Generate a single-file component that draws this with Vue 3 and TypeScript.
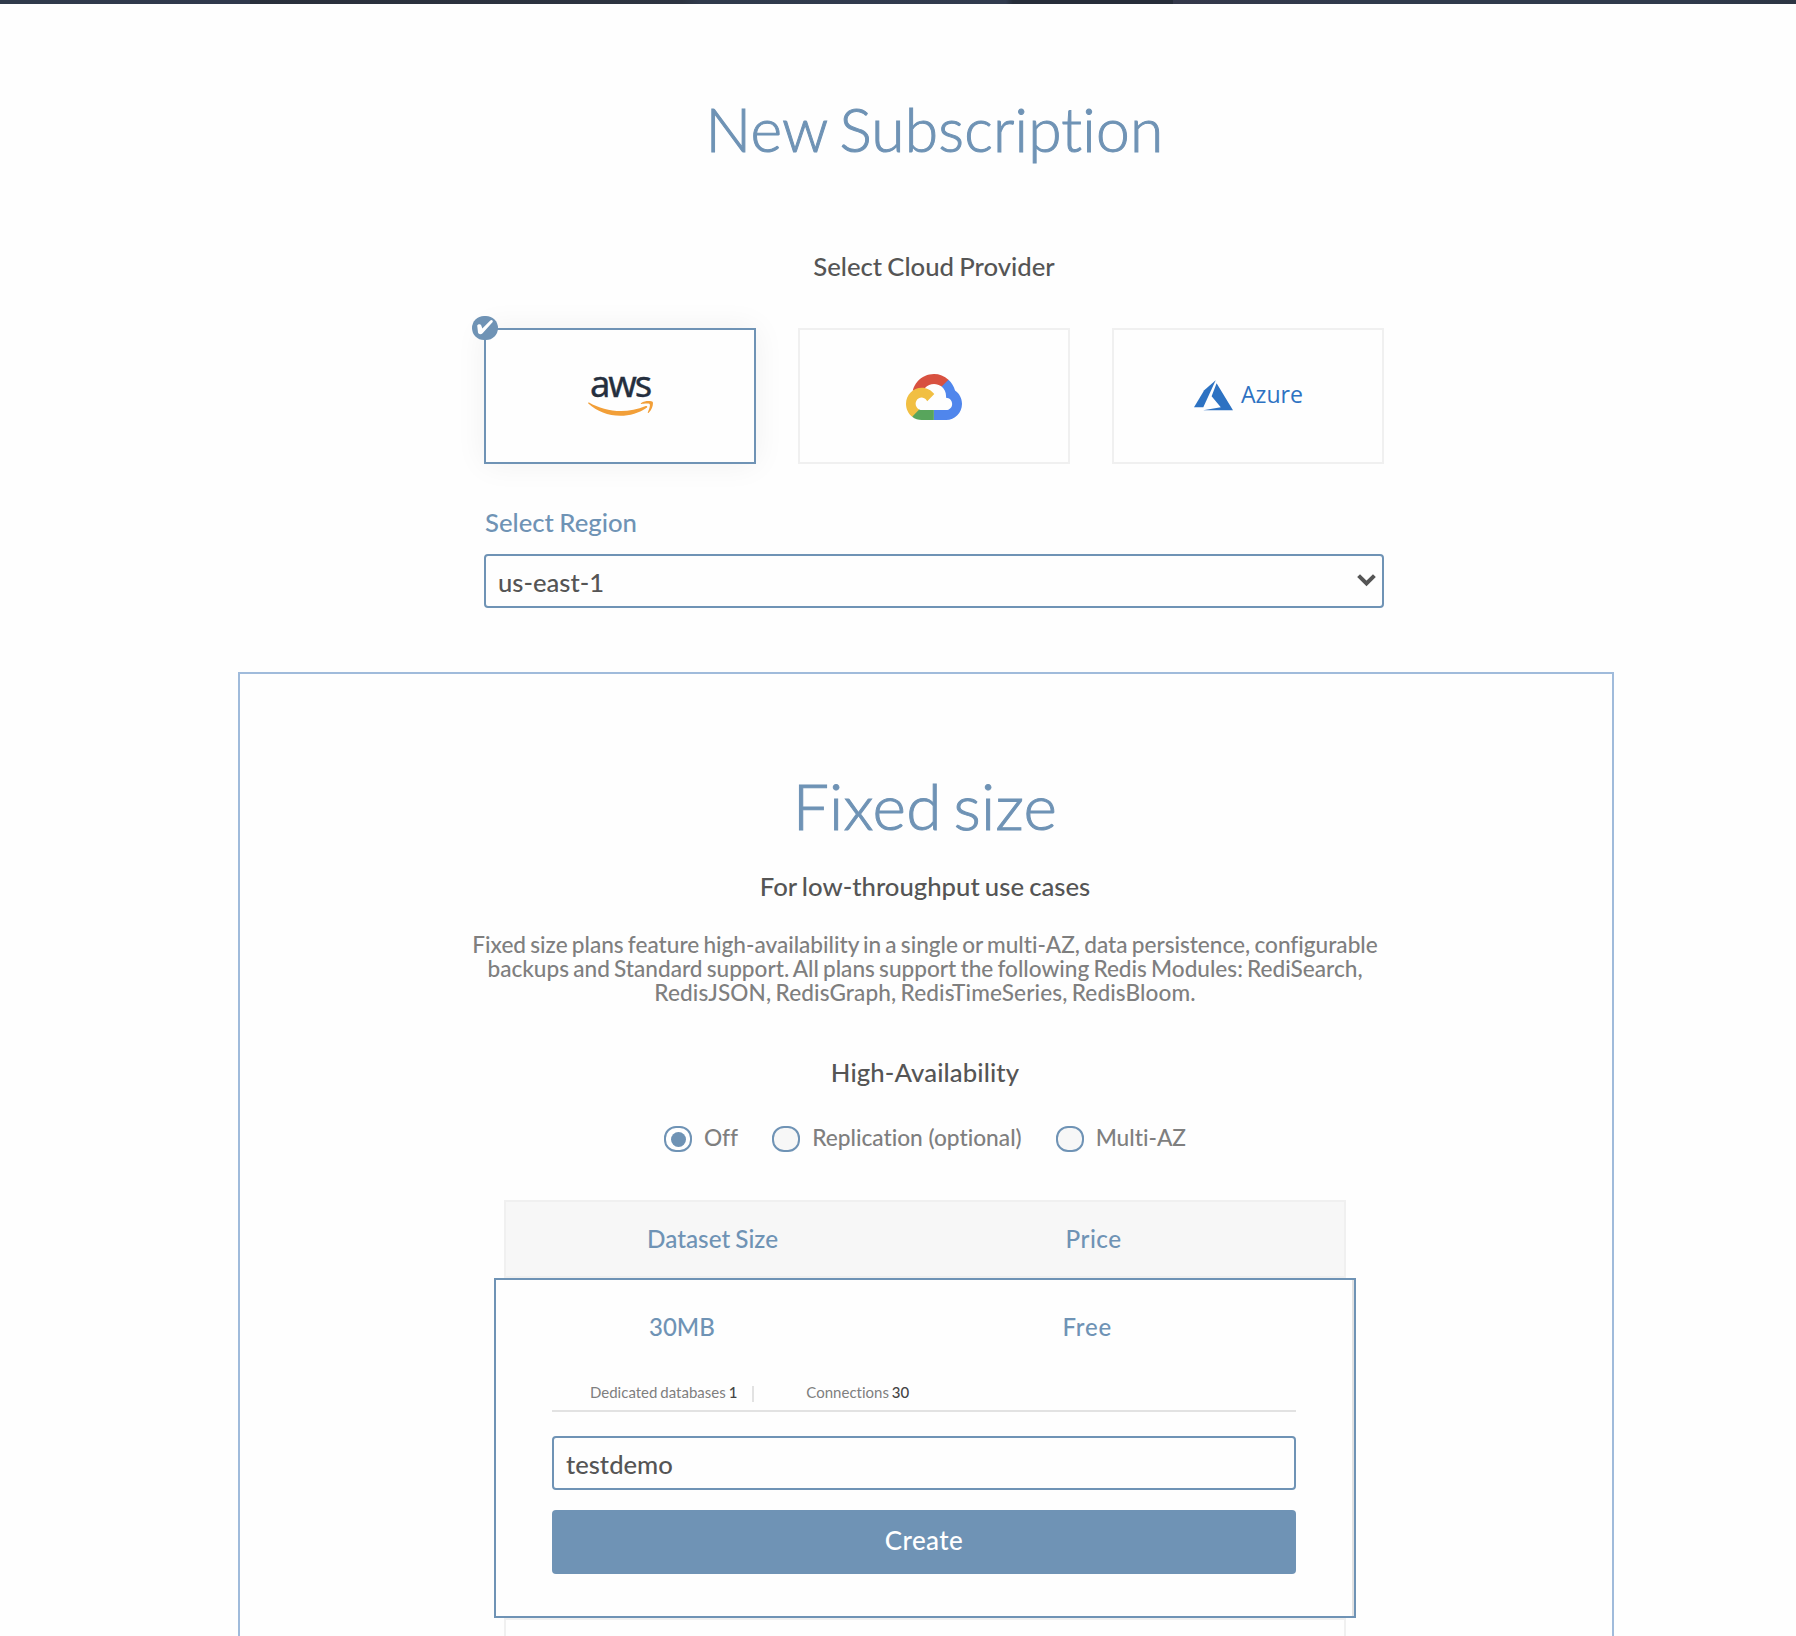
<script setup lang="ts">
import { ref } from 'vue'

const region = ref('us-east-1')
const dbName = ref('testdemo')
const availability = ref('off')
const options = [
  { id: 'off', label: 'Off' },
  { id: 'replication', label: 'Replication (optional)' },
  { id: 'multi', label: 'Multi-AZ' },
]
</script>

<template>
  <div class="page">
    <div class="topbar"></div>
    <section class="setup">
      <h1>New Subscription</h1>
      <h2 class="subhead">Select Cloud Provider</h2>
      <div class="providers">
        <div class="provider selected">
          <svg class="badge" width="26" height="24" viewBox="0 0 26 24">
            <rect width="26" height="24" rx="12" fill="#6f93b5" />
            <path d="M5.2 9.6C6.2 8 8.6 8 9.3 9.4L10.3 12.6L18.3 4.6C19.6 3.4 21.2 4.4 20.7 6L10.6 17.2C9.2 18.8 6.6 18.6 6 16.6Z" fill="#fff" />
          </svg>
          <div class="aws">
            <span class="aws-word">aws</span>
            <svg width="65" height="15" viewBox="1.5 113 301 69" fill="#f29f38">
              <path d="M273.5 143.7c-32.9 24.3-80.7 37.2-121.8 37.2c-57.6 0-109.5-21.3-148.7-56.7c-3.1-2.8-.3-6.6 3.4-4.4c42.4 24.6 94.7 39.5 148.8 39.5c36.5 0 76.6-7.6 113.5-23.2c5.5-2.5 10.2 3.6 4.8 7.6z" />
              <path d="M287.2 128.1c-4.2-5.4-27.8-2.6-38.5-1.3c-3.2.4-3.7-2.4-.8-4.5c18.8-13.2 49.7-9.4 53.3-5c3.6 4.5-1 35.4-18.6 50.2c-2.7 2.3-5.3 1.1-4.1-1.9c4-9.9 12.9-32.2 8.7-37.5z" />
            </svg>
          </div>
        </div>
        <div class="provider">
          <svg class="gcp" width="56" height="46" viewBox="0 0 256 206" preserveAspectRatio="none">
            <path fill="#d85140" d="M170.25 56.82L192.5 34.57L193.99 25.2C153.44-11.68 88.98-7.5 52.42 33.92C42.27 45.42 34.73 59.76 30.72 74.57L38.69 73.45L83.19 66.11L86.63 62.6C106.43 40.86 139.9 37.93 162.76 56.43Z" />
            <path fill="#5086ec" d="M224.2 73.92C219.09 55.08 208.59 38.15 193.99 25.2L162.76 56.43C175.94 67.2 183.46 83.43 183.13 100.46V106C198.49 106 210.93 118.45 210.93 133.8C210.93 149.15 198.49 161.29 183.13 161.29H127.46V205.8H183.13C223.06 206.1 255.69 174.3 256 134.37C256.19 110.17 244.25 87.48 224.2 73.92" />
            <path fill="#58a55c" d="M71.87 205.8H127.46V161.29H71.87C67.91 161.29 64 160.44 60.39 158.8L52.58 161.22L30.17 183.47L28.22 191.04C40.78 200.52 56.13 205.86 71.87 205.8" />
            <path fill="#f1bf42" d="M71.87 61.43C31.94 61.66-.24 94.23 0 134.16C.14 156.45 10.55 177.45 28.22 191.04L60.39 158.86C46.4 152.55 40.18 136.08 46.5 122.09C52.82 108.09 69.29 101.87 83.28 108.19C89.44 110.98 94.38 115.92 97.17 122.09L129.34 89.91C115.66 72 94.4 61.55 71.87 61.43" />
          </svg>
        </div>
        <div class="provider azure">
          <svg width="39" height="31" viewBox="0 0 39 31" fill="#2d72c2">
            <path d="M21.7.3L10.2 10.2L0 27.3H9.3Z" />
            <path d="M22.6 3.3L17.6 16.2L26.8 27.3L9.2 30.3H39Z" />
          </svg>
          <span class="azure-word">Azure</span>
        </div>
      </div>
      <label class="region-label">Select Region</label>
      <div class="field">
        <span>{{ region }}</span>
        <svg class="chevron" width="19" height="13" viewBox="0 0 19 13">
          <path d="M1.6 1.6L9.5 9.5L17.4 1.6" fill="none" stroke="#555" stroke-width="4" />
        </svg>
      </div>
    </section>

    <section class="panel">
      <h1 class="panel-title">Fixed size</h1>
      <h2 class="subhead low">For low-throughput use cases</h2>
      <p class="desc">
        Fixed size plans feature high-availability in a single or multi-AZ, data persistence, configurable<br />
        backups and Standard support. All plans support the following Redis Modules: RediSearch,<br />
        <span class="modules">RedisJSON, RedisGraph, RedisTimeSeries, RedisBloom.</span>
      </p>
      <h2 class="subhead ha">High-Availability</h2>
      <div class="radios">
        <div v-for="o in options" :key="o.id" class="option" @click="availability = o.id">
          <span class="radio" :class="{ on: availability === o.id }"></span><span>{{ o.label }}</span>
        </div>
      </div>
      <div class="table">
        <div class="thead">
          <span class="c1">Dataset Size</span><span class="price">Price</span>
        </div>
        <div class="plan">
          <div class="plan-row"><span class="c1">30MB</span><span class="price">Free</span></div>
          <div class="stats">
            <span>Dedicated databases <b>1</b></span>
            <i class="sep"></i>
            <span class="conn">Connections <b>30</b></span>
          </div>
          <div class="field name"><span>{{ dbName }}</span></div>
          <button class="create">Create</button>
        </div>
        <div class="next-row"></div>
      </div>
    </section>
  </div>
</template>

<style>
body {
  background: #fefefe;
}
</style>

<style scoped>
.page {
  box-sizing: border-box;
  width: 1796px;
  height: 1636px;
  overflow: hidden;
  font-family: Lato, 'Liberation Sans', sans-serif;
  font-weight: 500;
  font-variant-ligatures: none;
  color: #555;
}
.page *,
.page *::before {
  box-sizing: border-box;
}
.topbar {
  height: 4px;
  background: linear-gradient(90deg, #303a4b 0, #30394c 13.9%, #292f3b 13.9%, #2d3441 38%, #303a4c 39%, #313b4e 56%, #262d39 56.4%, #262d39 65.3%, #34384a 65.3%, #303a4c 76%, #303a4c 94%, #2c3543 100%);
}
h1,
h2,
p {
  margin: 0;
}
h1 {
  font-weight: 300;
  color: #6f93b5;
  text-align: center;
  word-spacing: -4.5px;
  -webkit-text-stroke: 1px #6f93b5;
}
.setup {
  width: 900px;
  margin-left: 484px;
}
.setup h1 {
  padding: 89px 0 0 1px;
  font-size: 60.5px;
  line-height: 72px;
  letter-spacing: 0.2px;
}
.subhead {
  margin-top: 85px;
  font-size: 25.7px;
  font-weight: 500;
  line-height: 32px;
  text-align: center;
  word-spacing: -1.3px;
}
.providers {
  display: flex;
  gap: 42px;
  margin-top: 46px;
}
.provider {
  position: relative;
  display: flex;
  align-items: flex-start;
  justify-content: center;
  width: 272px;
  height: 136px;
  border: 2px solid #f0f0f0;
}
.selected {
  border-color: #6f93b5;
  box-shadow: 0 0 30px rgba(0, 0, 0, 0.06);
}
.badge {
  position: absolute;
  left: -14px;
  top: -14px;
}
.aws {
  display: flex;
  flex-direction: column;
  align-items: center;
  padding-top: 33px;
}
.aws-word {
  height: 38px;
  font-family: 'Noto Sans', sans-serif;
  font-size: 36.4px;
  font-weight: 400;
  line-height: 40px;
  letter-spacing: -2.1px;
  color: #252f3e;
  -webkit-text-stroke: 0.4px #252f3e;
}
.gcp {
  margin-top: 44px;
}
.azure {
  padding-left: 1px;
  gap: 8px;
}
.azure svg {
  margin-top: 50px;
}
.azure-word {
  margin-top: 48px;
  font-family: 'Open Sans', 'Noto Sans', sans-serif;
  font-size: 23.1px;
  font-weight: 400;
  line-height: 32px;
  color: #2d72c2;
}
.region-label {
  display: block;
  margin-top: 42px;
  padding-left: 1px;
  font-size: 25.7px;
  line-height: 32px;
  word-spacing: -1px;
  color: #6f93b5;
}
.field {
  display: flex;
  align-items: center;
  justify-content: space-between;
  height: 54px;
  margin-top: 16px;
  padding: 1px 6px 0 12px;
  border: 2px solid #6f93b5;
  border-radius: 4px;
  font-size: 25.6px;
  line-height: 32px;
}
.chevron {
  margin-top: -2px;
}
.panel {
  width: 1376px;
  height: 1000px;
  margin: 64px 0 0 238px;
  padding-right: 2px;
  border: 2px solid #a0bbdb;
}
.panel-title {
  padding-top: 94px;
  font-size: 64px;
  line-height: 76px;
  letter-spacing: 0.3px;
  word-spacing: -6px;
}
.low {
  margin-top: 26px;
}
.desc {
  margin-top: 31px;
  font-size: 22.6px;
  line-height: 24px;
  word-spacing: -1.5px;
  text-align: center;
  white-space: nowrap;
  color: #7f7f7f;
}
.modules {
  letter-spacing: 0.11px;
}
.ha {
  margin-top: 51px;
  letter-spacing: 0.12px;
}
.radios {
  display: flex;
  gap: 34px;
  height: 26px;
  margin: 38px 0 0 424px;
  font-size: 22.7px;
  line-height: 23px;
  color: #7f7f7f;
}
.option {
  display: flex;
  gap: 12px;
}
.radio {
  display: flex;
  align-items: center;
  justify-content: center;
  width: 28px;
  height: 26px;
  border: 2px solid #6f93b5;
  border-radius: 12px;
  background: #f7f7f7;
}
.radio.on {
  background: #fff;
}
.radio.on::before {
  content: '';
  width: 15px;
  height: 15px;
  margin-top: 1px;
  border-radius: 50%;
  background: #6f93b5;
}
.table {
  width: 842px;
  margin: 48px 0 0 264px;
}
.thead {
  display: flex;
  height: 78px;
  padding: 22px 0 0 141px;
  border: 2px solid #f0f0f0;
  background: #f7f7f7;
  font-size: 24.3px;
  line-height: 30px;
  word-spacing: -1px;
  color: #6f93b5;
}
.c1 {
  width: 418.5px;
}
.thead .price {
  letter-spacing: 0.5px;
}
.plan {
  width: 862px;
  height: 340px;
  margin-left: -10px;
  padding: 32px 58px 0 56px;
  border: 2px solid #6f93b5;
  background: #fefefe;
  box-shadow: inset -2px 0 0 #e2e2e2;
}
.plan-row {
  display: flex;
  margin-left: 97px;
  font-size: 24px;
  line-height: 30px;
  color: #6f93b5;
}
.plan-row .c1 {
  width: 413.5px;
}
.plan-row .price {
  letter-spacing: 0.8px;
}
.stats {
  display: flex;
  height: 30px;
  margin-top: 40px;
  padding-left: 38px;
  border-bottom: 2px solid #e2e2e2;
  font-size: 15px;
  font-weight: 400;
  line-height: 20px;
  word-spacing: -0.9px;
  color: #7f7f7f;
}
.stats b {
  font-weight: 500;
  color: #444;
}
.sep {
  width: 2px;
  height: 16px;
  margin: 4px 0 0 14.5px;
  background: #e2e2e2;
}
.conn {
  margin-left: 52.5px;
}
.name {
  margin-top: 24px;
}
.create {
  display: block;
  width: 100%;
  height: 64px;
  margin-top: 20px;
  padding: 0 0 4px;
  border: 0;
  border-radius: 4px;
  background: #6f93b5;
  font: 500 26px/32px Lato, sans-serif;
  letter-spacing: 0.4px;
  color: #fff;
}
.next-row {
  height: 78px;
  border: 2px solid #f0f0f0;
}
</style>
